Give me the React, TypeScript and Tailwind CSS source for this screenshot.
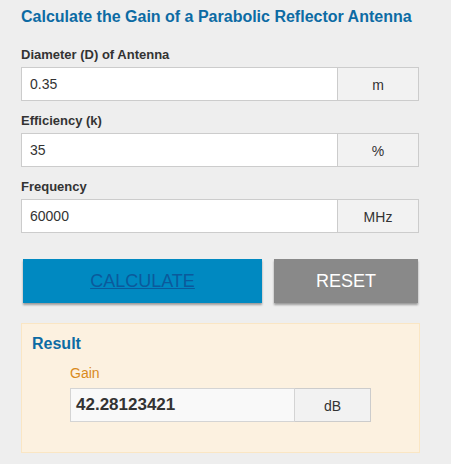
import React from "react";

function Field({ label, value, unit, first }: { label: string; value: string; unit: string; first?: boolean }) {
  return (
    <div className={first ? "" : "mt-[12px]"}>
      <div className="text-[13px] leading-[16px] font-bold text-[#333333] h-[16px] mb-[4px]">{label}</div>
      <div className="flex h-[34px] w-[398px]">
        <div className="flex-1 bg-white border border-[#cccccc] flex items-center pl-[8px] text-[14px] text-[#333333]">
          {value}
        </div>
        <div className="w-[81px] bg-[#f2f2f2] border border-l-0 border-[#cccccc] flex items-center justify-center text-[14px] text-[#333333] pt-[3px]">
          {unit}
        </div>
      </div>
    </div>
  );
}

export default function App() {
  return (
    <div className="w-[451px] h-[464px] bg-[#eeeeee] overflow-hidden" style={{ fontFamily: '"Liberation Sans", Arial, sans-serif' }}>
      <div className="pl-[21px] pt-[8px]">
        <div className="text-[16px] leading-[18px] font-bold text-[#0c6ba4] h-[18px] whitespace-nowrap">
          Calculate the Gain of a Parabolic Reflector Antenna
        </div>
        <div className="mt-[21px]">
          <Field first label="Diameter (D) of Antenna" value="0.35" unit="m" />
          <Field label="Efficiency (k)" value="35" unit="%" />
          <Field label="Frequency" value="60000" unit="MHz" />
        </div>
        <div className="flex mt-[26px] ml-[2px] gap-[12px]">
          <button className="w-[239px] h-[44px] bg-[#0089c1] text-[18px] text-[#0b5a9c] underline shadow-[0_2px_2px_rgba(0,0,0,0.35)]">
            CALCULATE
          </button>
          <button className="w-[144px] h-[44px] bg-[#898989] text-[18px] text-white shadow-[0_2px_2px_rgba(0,0,0,0.35)]">
            RESET
          </button>
        </div>
        <div className="mt-[20px] w-[399px] h-[130px] bg-[#fcf1e0] border border-[#fae6c4] pl-[10px] pt-[11px]">
          <div className="text-[16px] leading-[18px] font-bold text-[#0c6ba4]">Result</div>
          <div className="ml-[38px] mt-[12px]">
            <div className="text-[14px] leading-[16px] text-[#d98a1c]">Gain</div>
            <div className="flex h-[34px] w-[301px] mt-[7px]">
              <div className="w-[225px] bg-[#f9f9f9] border border-[#d4d4d4] flex items-center pl-[5px] text-[17px] font-bold text-[#333333]">
                42.28123421
              </div>
              <div className="flex-1 bg-[#f2f2f2] border border-l-0 border-[#cccccc] flex items-center justify-center text-[14px] text-[#333333] pt-[2px]">
                dB
              </div>
            </div>
          </div>
        </div>
      </div>
    </div>
  );
}
